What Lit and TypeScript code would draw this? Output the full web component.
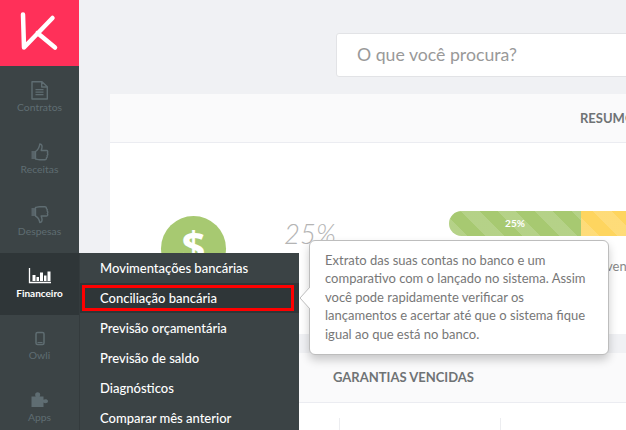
import { LitElement, html, css, svg } from "lit";
import { customElement } from "lit/decorators.js";

const icons: Record<string, unknown> = {
  doc: svg`<path d="M2 1.700h10l5.300 5V19H2z M11.700 1.700v5.300h5.600" fill="none" stroke="currentColor" stroke-width="1.400" stroke-linejoin="round"/><path d="M5.500 9.700h8M5.500 12.200h8M5.500 14.700h8" stroke="currentColor" stroke-width="1.300"/>`,
  up: svg`<path d="M1.500 9h4v8h-4z" fill="currentColor" opacity=".8"/><path d="M5.500 9.500c2.500-1.500 3.800-4 4.300-7.500 2 .2 2.700 2 2 4.500l-.6 2h5.300c1.300 0 1.600 1.500.8 2.400.8 1 .6 2-.2 2.600.4 1 .1 2-.7 2.400.2 1.200-.5 1.900-1.600 1.900H9.500c-1.700 0-2.700-.7-4-.8z" fill="none" stroke="currentColor" stroke-width="1.400" stroke-linejoin="round"/>`,
  down: svg`<path d="M1.500 4h4v8h-4z" fill="currentColor" opacity=".8"/><path d="M5.500 12c2.500 1.200 3.800 3.500 4.300 6.500 2-.2 2.700-2 2-4.500l-.6-2h5.300c1.300 0 1.600-1.500.8-2.400.8-1 .6-2-.2-2.600.4-1 .1-2-.7-2.400.2-1.200-.5-1.900-1.600-1.900H9.500c-1.700 0-2.700.7-4 .8z" fill="none" stroke="currentColor" stroke-width="1.400" stroke-linejoin="round"/>`,
  chart: svg`<path d="M-.5 2v14.500H21" fill="none" stroke="currentColor" stroke-width="1.300"/><path d="M2.500 9h3v6h-3zM6.500 11h2.500v4H6.500zM10 6.500h3V15h-3zM14 9.500h2.500V15H14zM17.500 5.500h3V15h-3z" fill="currentColor"/>`,
  phone: svg`<rect x="6" y="4.500" width="8" height="12" rx="1.500" fill="none" stroke="currentColor" stroke-width="1.500"/><path d="M7.500 14.500h5" stroke="currentColor" stroke-width="1"/>`,
  puzzle: svg`<path d="M1.500 6.500h4.300c-1-1-1-4.300 1.900-4.300s2.900 3.300 1.900 4.300h3.900v3.300c1-.9 4.500-.9 4.500 1.400s-3.500 2.300-4.500 1.400V17H1.500z" fill="currentColor"/>`,
};

const NAV = [
  ["doc", "Contratos"],
  ["up", "Receitas"],
  ["down", "Despesas"],
  ["chart", "Financeiro", "on"],
  ["phone", "Owli"],
  ["puzzle", "Apps"],
];

const MENU = [
  "Movimentações bancárias",
  "Conciliação bancária",
  "Previsão orçamentária",
  "Previsão de saldo",
  "Diagnósticos",
  "Comparar mês anterior",
];

@customElement("app-root")
export class AppRoot extends LitElement {
  static styles = css`
    :host {
      display: block;
      width: 626px;
      height: 430px;
      font-family: Lato, "Liberation Sans", sans-serif;
    }
    .page {
      position: relative;
      width: 626px;
      height: 430px;
      display: flex;
      overflow: hidden;
      background: #f0f1f4;
    }
    .side {
      width: 79px;
      flex: none;
      background: #3c4446;
    }
    .logo {
      height: 66px;
      margin-bottom: 1px;
      background: #ff3059;
      display: block;
    }
    .logo svg {
      display: block;
    }
    .nav {
      height: 62px;
      display: flex;
      flex-direction: column;
      align-items: center;
      color: #5f6d72;
      font-size: 10.400px;
      padding-top: 13px;
      box-sizing: border-box;
    }
    .nav svg {
      width: 20px;
      height: 20px;
      display: block;
      overflow: visible;
    }
    .nav span {
      line-height: 14px;
    }
    .nav.on {
      background: #2f3638;
      color: #fff;
      font-size: 10px;
      font-weight: 700;
    }
    .main {
      flex: 1;
      min-width: 0;
      padding: 33px 0 0 31px;
      box-sizing: border-box;
    }
    .search {
      margin-left: 226px;
      width: 500px;
      height: 44px;
      box-sizing: border-box;
      background: #fff;
      border: 1px solid #e2e3e6;
      border-radius: 3px;
      color: #999;
      font-size: 17.700px;
      line-height: 42px;
      padding-left: 20px;
    }
    .card {
      width: 700px;
      margin-top: 17px;
      background: #fff;
      border-radius: 3px 3px 0 0;
    }
    .head {
      height: 49px;
      box-sizing: border-box;
      background: #fafafb;
      border-bottom: 1px solid #ebecf1;
      color: #6f7375;
      font-size: 13px;
      font-weight: 700;
      line-height: 48px;
      padding-left: 470px;
      white-space: nowrap;
    }
    .body {
      height: 191px;
      display: flex;
      align-items: flex-start;
    }
    .coin {
      width: 65px;
      height: 65px;
      margin: 73px 0 0 51px;
      border-radius: 50%;
      background: #a7c971;
      color: #fff;
      font: 700 42px/58px "Open Sans", sans-serif;
      text-align: center;
      flex: none;
    }
    .pct {
      margin: 71px 0 0 58px;
      width: 165px;
      flex: none;
      color: #b4b4b4;
      font-size: 27.500px;
      font-weight: 300;
      font-style: italic;
      line-height: 40px;
    }
    .pct small {
      display: block;
      margin: 4px 0 0 -3px;
      color: #888;
      font-size: 13px;
      line-height: 16px;
    }
    .barcol {
      margin-top: 68px;
      width: 250px;
      flex: none;
    }
    .bar {
      display: flex;
      height: 25px;
      border-radius: 13px 0 0 13px;
      overflow: hidden;
      color: #fff;
      font-size: 10px;
      font-weight: 700;
      line-height: 25px;
      text-align: center;
    }
    .g,
    .y {
      background-image: repeating-linear-gradient(
        45deg,
        rgba(255, 255, 255, 0.16) 0 13px,
        transparent 13px 26px
      );
    }
    .g {
      width: 132px;
      background-color: #a7c971;
    }
    .y {
      flex: 1;
      background-color: #fed55f;
    }
    .ven {
      margin: 22px 0 0 157px;
      color: #888;
      font-size: 13px;
      line-height: 16px;
    }
    .card2 {
      width: 700px;
      margin-top: 19px;
      height: 100px;
      background: #fff;
    }
    .head2 {
      height: 50px;
      box-sizing: border-box;
      background: #fafafb;
      border-bottom: 1px solid #ebecf1;
      color: #6f7375;
      font-size: 13px;
      font-weight: 700;
      line-height: 48px;
      padding-left: 223px;
    }
    .cols {
      margin: 15px 0 0 229px;
      width: 160px;
      height: 40px;
      border-left: 1px solid #ecedf0;
      border-right: 1px solid #ecedf0;
    }
    .fly {
      position: absolute;
      left: 79px;
      top: 253px;
      width: 220px;
      height: 177px;
      background: #3b4345;
      border-left: 1px solid #343b3d;
      box-sizing: border-box;
    }
    .item {
      height: 30px;
      padding-left: 20px;
      color: #fff;
      font-size: 13px;
      font-weight: 500;
      line-height: 30px;
      white-space: nowrap;
    }
    .item.cur {
      background: #2f3638;
      position: relative;
    }
    .item.cur::after {
      content: "";
      position: absolute;
      left: 2px;
      top: 2px;
      width: 212px;
      height: 26px;
      box-sizing: border-box;
      border: 3px solid #f00;
    }
    .tip {
      position: absolute;
      left: 309px;
      top: 240px;
      width: 300px;
      height: 115px;
      box-sizing: border-box;
      background: #fff;
      border: 1px solid #bdbdbd;
      border-radius: 6px;
      box-shadow: 0 5px 10px rgba(0, 0, 0, 0.2);
      padding: 10px 15px;
      color: #777;
      font-size: 13px;
      line-height: 18.400px;
    }
    .arrow {
      position: absolute;
      left: -11px;
      top: 46px;
      display: block;
    }
  `;

  render() {
    return html`<div class="page">
      <aside class="side">
        <div class="logo">
          <svg width="79" height="66" viewBox="0 0 79 66">
            <path
              d="M23 14.500 24 47.500 52.500 18M37.500 33 55 47.500"
              fill="none"
              stroke="#fff"
              stroke-width="4.500"
              stroke-linecap="round"
              stroke-linejoin="round"
            />
          </svg>
        </div>
        ${NAV.map(
          ([i, t, on]) => html`<div class="nav ${on ? "on" : ""}">
            <svg viewBox="0 0 20 20">${icons[i]}</svg><span>${t}</span>
          </div>`
        )}
      </aside>
      <main class="main">
        <div class="search">O que você procura?</div>
        <section class="card">
          <div class="head">RESUMO</div>
          <div class="body">
            <div class="coin">$</div>
            <div class="pct">25%<small>em</small></div>
            <div class="barcol">
              <div class="bar">
                <div class="g">25%</div>
                <div class="y"></div>
              </div>
              <div class="ven">vencidos</div>
            </div>
          </div>
        </section>
        <section class="card2">
          <div class="head2">GARANTIAS VENCIDAS</div>
          <div class="cols"></div>
        </section>
      </main>
      <div class="fly">
        ${MENU.map(
          (m, i) => html`<div class="item ${i === 1 ? "cur" : ""}">${m}</div>`
        )}
      </div>
      <div class="tip">
        <svg class="arrow" width="11" height="22" viewBox="0 0 11 22">
          <path d="M11 0 1 11 11 22" fill="#fff" stroke="#bdbdbd" />
        </svg>
        Extrato das suas contas no banco e um comparativo com o lançado no
        sistema. Assim você pode rapidamente verificar os lançamentos e acertar
        até que o sistema fique igual ao que está no banco.
      </div>
    </div>`;
  }
}
